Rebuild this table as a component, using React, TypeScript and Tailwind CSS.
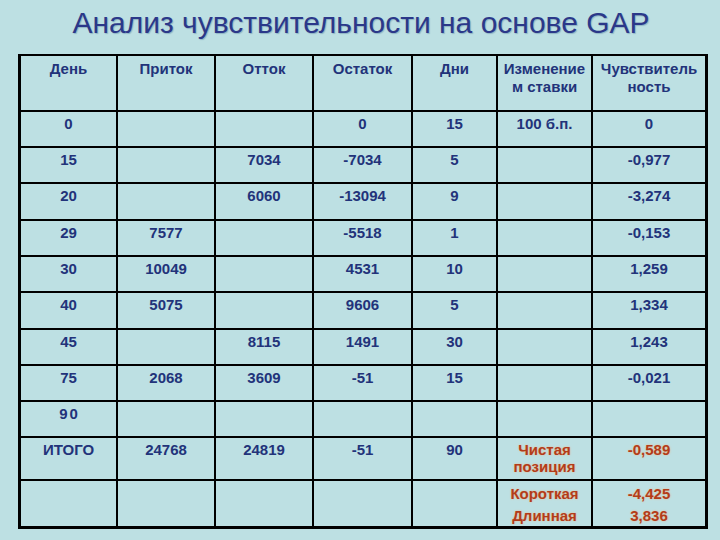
// GAP sensitivity slide — one fixed 720x540 page with a ruled grid table.

const COLS = "grid-cols-[95px_96px_96px_97px_83px_93px_112px]";
const ROWS =
  "grid-rows-[54px_34px_34px_35px_34px_34px_35px_34px_34px_34px_41px_45px]";

type Cell = string | { red: string[] };

const HEADER: string[][] = [
  ["День"],
  ["Приток"],
  ["Отток"],
  ["Остаток"],
  ["Дни"],
  ["Изменение", "м ставки"],
  ["Чувствитель", "ность"],
];

const BODY: Cell[][] = [
  ["0", "", "", "0", "15", "100 б.п.", "0"],
  ["15", "", "7034", "-7034", "5", "", "-0,977"],
  ["20", "", "6060", "-13094", "9", "", "-3,274"],
  ["29", "7577", "", "-5518", "1", "", "-0,153"],
  ["30", "10049", "", "4531", "10", "", "1,259"],
  ["40", "5075", "", "9606", "5", "", "1,334"],
  ["45", "", "8115", "1491", "30", "", "1,243"],
  ["75", "2068", "3609", "-51", "15", "", "-0,021"],
  ["9 0", "", "", "", "", "", ""],
  [
    "ИТОГО",
    "24768",
    "24819",
    "-51",
    "90",
    { red: ["Чистая", "позиция"] },
    { red: ["-0,589"] },
  ],
  ["", "", "", "", "", { red: ["Короткая", "Длинная"] }, { red: ["-4,425", "3,836"] }],
];

export default function App() {
  return (
    <div className="h-[540px] w-[720px] overflow-hidden bg-[#bde0e3] font-['Liberation_Sans',Arial,sans-serif]">
      <h1 className="flex h-[54px] items-center justify-center pb-[10px] pl-[2px] text-[30px] font-normal text-[#2b3889] [text-shadow:1px_1px_1px_#8fb4c4]">
        Анализ чувствительности на основе GAP
      </h1>

      <div
        className={`ml-[18px] grid w-[690px] gap-[2px] border-x-[3px] border-t-2 border-b-[3px] border-black bg-black ${COLS} ${ROWS}`}
      >
        {HEADER.map((lines, i) => (
          <div
            key={`h${i}`}
            className="bg-[#bde0e3] pt-[4px] text-center text-[15px] font-bold leading-[18px] text-[#22337a]"
          >
            {lines.map((l) => (
              <div key={l}>{l}</div>
            ))}
          </div>
        ))}

        {BODY.map((row, r) =>
          row.map((cell, c) => (
            <BodyCell key={`${r}-${c}`} cell={cell} tall={r === 10} />
          )),
        )}
      </div>
    </div>
  );
}

function BodyCell({ cell, tall }: { cell: Cell; tall: boolean }) {
  if (typeof cell === "string") {
    return (
      <div className="bg-[#bde0e3] pt-[3px] text-center text-[15px] font-bold leading-[18px] text-[#22337a]">
        {cell === "9 0" ? <span className="pl-[2px] tracking-[2px]">90</span> : cell}
      </div>
    );
  }
  return (
    <div
      className={`bg-[#bde0e3] text-center text-[15px] font-bold text-[#b23c1a] [text-shadow:0_0_2px_#f2b486] ${
        tall ? "pt-[2px] leading-[22px]" : "pt-[3px] leading-[17px]"
      }`}
    >
      {cell.red.map((l) => (
        <div key={l}>{l}</div>
      ))}
    </div>
  );
}
